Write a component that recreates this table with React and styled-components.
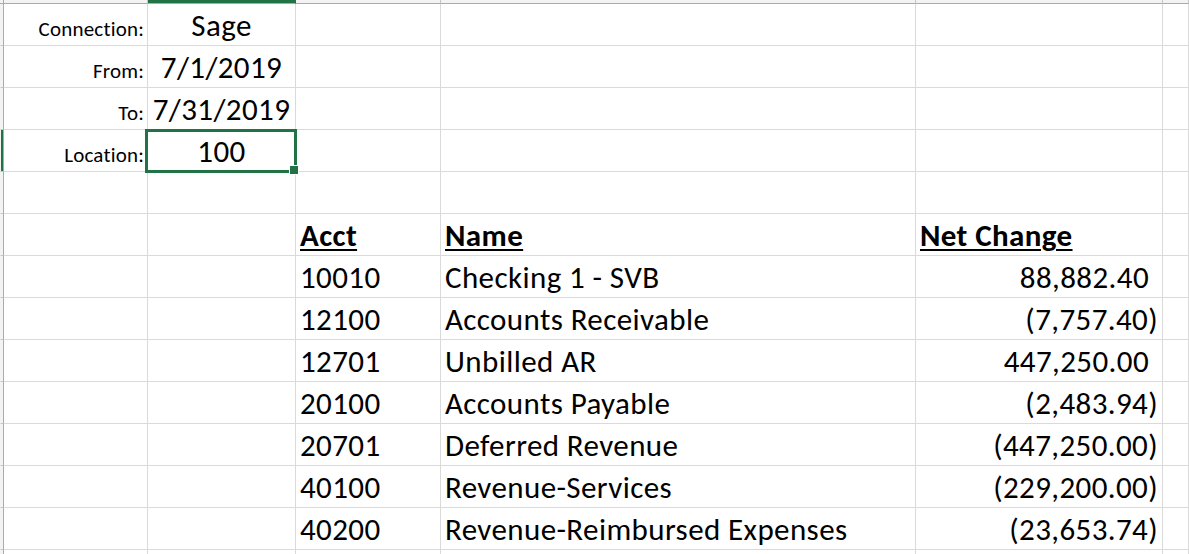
import React from "react";
import styled, { createGlobalStyle, css } from "styled-components";

const GRID = "#dadada";
const HEAD_LINE = "#ababab";
const EXCEL_GREEN = "#217346";

const GlobalStyle = createGlobalStyle`
  html, body {
    margin: 0;
    padding: 0;
    background: #fff;
  }
  body {
    overflow: hidden;
    font-family: Calibri, Carlito, Lato, "Liberation Sans", sans-serif;
    font-variant-ligatures: no-common-ligatures;
    color: #000;
  }
`;

const COLS = ["A", "B", "C", "D", "E", "F"];
const ROW_COUNT = 14;

const accounts = [
  ["10010", "Checking 1 - SVB", "88,882.40"],
  ["12100", "Accounts Receivable", "(7,757.40)"],
  ["12701", "Unbilled AR", "447,250.00"],
  ["20100", "Accounts Payable", "(2,483.94)"],
  ["20701", "Deferred Revenue", "(447,250.00)"],
  ["40100", "Revenue-Services", "(229,200.00)"],
  ["40200", "Revenue-Reimbursed Expenses", "(23,653.74)"],
];

const params = [
  ["Connection:", "Sage"],
  ["From:", "7/1/2019"],
  ["To:", "7/31/2019"],
  ["Location:", "100"],
];

function buildSheet() {
  const rows = Array.from({ length: ROW_COUNT }, () =>
    COLS.map(() => ({ kind: "empty" }))
  );
  params.forEach(([label, value], i) => {
    rows[i][0] = { kind: "label", text: label };
    rows[i][1] = { kind: "value", text: value, selected: i === 3 };
  });
  rows[5][2] = { kind: "head", text: "Acct" };
  rows[5][3] = { kind: "head", text: "Name" };
  rows[5][4] = { kind: "head", text: "Net Change" };
  accounts.forEach(([acct, name, amount], i) => {
    rows[6 + i][2] = { kind: "text", text: acct };
    rows[6 + i][3] = { kind: "text", text: name };
    rows[6 + i][4] = {
      kind: "amount",
      text: amount,
      negative: amount.startsWith("("),
    };
  });
  return rows;
}

export default function App() {
  const sheet = buildSheet();

  return (
    <>
      <GlobalStyle />
      <Sheet>
        <Corner />
        {COLS.map((c) => (
          <ColHead key={c} $selected={c === "B"} />
        ))}
        {sheet.map((row, r) => (
          <React.Fragment key={r}>
            <RowHead $selected={r === 3} />
            {row.map((cell, c) => {
              const key = `${r}-${c}`;
              switch (cell.kind) {
                case "label":
                  return <LabelCell key={key}>{cell.text}</LabelCell>;
                case "value":
                  return cell.selected ? (
                    <SelectedCell key={key}>
                      {cell.text}
                      <FillHandle />
                    </SelectedCell>
                  ) : (
                    <ValueCell key={key}>{cell.text}</ValueCell>
                  );
                case "head":
                  return (
                    <TextCell key={key}>
                      <HeadText>{cell.text}</HeadText>
                    </TextCell>
                  );
                case "text":
                  return <TextCell key={key}>{cell.text}</TextCell>;
                case "amount":
                  return (
                    <AmountCell key={key} $negative={cell.negative}>
                      {cell.text}
                    </AmountCell>
                  );
                default:
                  return <Cell key={key} />;
              }
            })}
          </React.Fragment>
        ))}
      </Sheet>
    </>
  );
}

const Sheet = styled.div`
  display: grid;
  grid-template-columns: 4px 144px 148px 145px 475px 247px 1fr;
  grid-template-rows: 4px repeat(${ROW_COUNT}, 42px);
  width: 1189px;
  height: 554px;
  overflow: hidden;
  background: #fff;
`;

const headerBase = css`
  box-sizing: border-box;
  background: #f3f3f3;
`;

const Corner = styled.div`
  ${headerBase};
  border-right: 1px solid ${HEAD_LINE};
  border-bottom: 1px solid ${HEAD_LINE};
`;

const ColHead = styled.div`
  ${headerBase};
  border-bottom: 1px solid ${HEAD_LINE};
  border-right: 1px solid #c6c6c6;
  ${({ $selected }) =>
    $selected &&
    css`
      background: ${EXCEL_GREEN};
      border-right-color: ${EXCEL_GREEN};
    `}
`;

const RowHead = styled.div`
  ${headerBase};
  border-left: 1px solid #f3f3f3;
  border-right: 1px solid ${HEAD_LINE};
  border-bottom: 1px solid #c6c6c6;
  ${({ $selected }) =>
    $selected &&
    css`
      background: ${EXCEL_GREEN};
    `}
`;

const Cell = styled.div`
  position: relative;
  box-sizing: border-box;
  display: flex;
  align-items: flex-end;
  min-width: 0;
  border-right: 1px solid ${GRID};
  border-bottom: 1px solid ${GRID};
  padding: 0 4px 4px 4px;
  font-size: 31px;
  line-height: 1;
  letter-spacing: 0.4px;
  white-space: nowrap;
`;

const LabelCell = styled(Cell)`
  justify-content: flex-end;
  font-size: 21px;
  letter-spacing: 0.2px;
  padding-bottom: 5px;
  padding-right: 3px;
`;

const ValueCell = styled(Cell)`
  justify-content: center;
  overflow: visible;
`;

const SelectedCell = styled(ValueCell)`
  z-index: 1;

  &::after {
    content: "";
    position: absolute;
    left: -3px;
    top: -1px;
    right: -2px;
    bottom: -2px;
    border: 3px solid ${EXCEL_GREEN};
    pointer-events: none;
  }
`;

const FillHandle = styled.span`
  position: absolute;
  right: -4px;
  bottom: -4px;
  width: 10px;
  height: 10px;
  box-sizing: border-box;
  background: ${EXCEL_GREEN};
  border: 1px solid #fff;
  z-index: 2;
`;

const TextCell = styled(Cell)`
  justify-content: flex-start;
  padding-left: 4px;
`;

const HeadText = styled.span`
  font-weight: 700;
  text-decoration: underline;
  text-decoration-thickness: 2px;
  text-underline-offset: 3px;
`;

const AmountCell = styled(Cell)`
  justify-content: flex-end;
  padding-right: ${({ $negative }) => ($negative ? "4px" : "13px")};
`;
